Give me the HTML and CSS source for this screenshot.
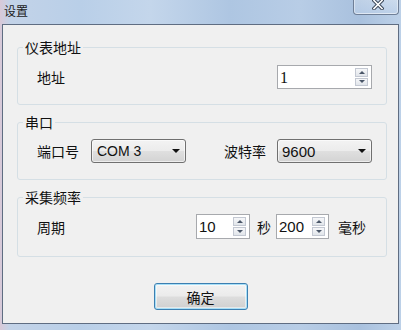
FILE: index.html
```html
<!DOCTYPE html>
<html lang="zh-CN">
<head>
<meta charset="utf-8">
<title>设置</title>
<link rel="stylesheet" href="styles.css">
</head>
<body>
<div class="window">
  <div class="titlebar">
    <span class="title">设置</span>
    <div class="close">
      <svg width="12" height="10" viewBox="0 0 12 10">
        <path d="M2 0.5 L10 8.5 M10 0.5 L2 8.5" stroke="#3a4658" stroke-width="3.6" stroke-linecap="square" fill="none"/>
        <path d="M2 0.5 L10 8.5 M10 0.5 L2 8.5" stroke="#ffffff" stroke-width="1.6" stroke-linecap="square" fill="none"/>
      </svg>
    </div>
  </div>
  <div class="client">
    <fieldset class="group first">
      <legend>仪表地址</legend>
      <div class="row">
        <span class="label">地址</span>
        <div class="spin w95 push">
          <span class="val serif">1</span>
          <div class="arrows"><span class="sb up"></span><span class="sb down"></span></div>
        </div>
      </div>
    </fieldset>
    <fieldset class="group">
      <legend>串口</legend>
      <div class="row">
        <span class="label">端口号</span>
        <div class="combo w95 gap12"><span class="val narrow">COM 3</span><span class="caret"></span></div>
        <span class="label push">波特率</span>
        <div class="combo w95 gap11"><span class="val">9600</span><span class="caret"></span></div>
      </div>
    </fieldset>
    <fieldset class="group">
      <legend>采集频率</legend>
      <div class="row tall">
        <span class="label">周期</span>
        <div class="spin w54 push">
          <span class="val">10</span>
          <div class="arrows"><span class="sb up"></span><span class="sb down"></span></div>
        </div>
        <span class="label unit1">秒</span>
        <div class="spin w53 gap5">
          <span class="val">200</span>
          <div class="arrows"><span class="sb up"></span><span class="sb down"></span></div>
        </div>
        <span class="label unit2">毫秒</span>
      </div>
    </fieldset>
    <div class="actions">
      <button class="btn" type="button">确定</button>
    </div>
  </div>
</div>
</body>
</html>
```

FILE: styles.css
```css
html, body {
  margin: 0;
  padding: 0;
}
body {
  width: 401px;
  height: 330px;
  overflow: hidden;
  font-family: "Noto Sans CJK SC", "Liberation Sans", sans-serif;
  color: #111;
}
.window {
  width: 401px;
  height: 330px;
  background: linear-gradient(90deg, #d9c9d8 0px, #c3d3e8 10px, #b9cfe8 80px, #c4d6eb 150px, #aec6e2 230px, #b8cde6 300px, #a9c1de 360px, #bdd1e8 401px);
  display: flex;
  flex-direction: column;
}
.titlebar {
  height: 24px;
  display: flex;
  justify-content: space-between;
  align-items: flex-start;
  flex: none;
}
.title {
  font-size: 12px;
  line-height: 12px;
  padding: 5px 0 0 4px;
  color: #1b1b1b;
}
.close {
  width: 44px;
  height: 14px;
  margin-right: 2px;
  border: 1px solid #6f7f97;
  border-top: none;
  border-radius: 0 0 4px 4px;
  background: linear-gradient(180deg, rgba(255,255,255,0.25), rgba(190,210,235,0.55));
  box-shadow: inset 0 -1px 0 rgba(255,255,255,0.55), inset 1px 0 0 rgba(255,255,255,0.4), inset -1px 0 0 rgba(255,255,255,0.4);
  display: flex;
  justify-content: center;
  align-items: flex-start;
}
.close svg {
  display: block;
  margin-left: 3px;
}
.client {
  height: 300px;
  box-sizing: border-box;
  margin: 0 2px;
  border: 1px solid #5f6d82;
  background: #f0f0f0;
  display: flex;
  flex-direction: column;
  flex: none;
}
.group {
  margin: 10px 11px 0 14px;
  border: 1px solid #d5dfe5;
  border-radius: 3px;
  padding: 10px 14px 16px 19px;
  min-width: 0;
}
.group.first {
  margin-top: 15px;
  padding-top: 11px;
  padding-bottom: 15px;
}
.group:last-of-type {
  padding-bottom: 17px;
}
legend {
  font-size: 14px;
  line-height: 14px;
  padding: 0 2px;
  margin-left: -14px;
  color: #111;
}
.row {
  display: flex;
  align-items: center;
  height: 24px;
}
.row.tall {
  height: 25px;
}
.label {
  font-size: 14px;
  line-height: 14px;
  white-space: nowrap;
}
.push {
  margin-left: auto;
}
.gap12 { margin-left: 12px; }
.gap11 { margin-left: 11px; }
.gap5 { margin-left: 5px; }
.unit1 { margin-left: 7px; }
.unit2 { margin-left: 9px; margin-right: 6px; }
.w95 { width: 95px; }
.w54 { width: 54px; }
.w53 { width: 53px; }
.spin {
  height: 100%;
  box-sizing: border-box;
  border: 1px solid #a7a9ad;
  background: #fff;
  display: flex;
  align-items: center;
  padding: 2px 3px 2px 2px;
}
.val {
  font-family: "Liberation Sans", sans-serif;
  font-size: 15px;
  line-height: 15px;
  flex: 1;
  color: #111;
}
.val.serif {
  font-family: "Liberation Serif", serif;
  font-size: 16px;
}
.val.narrow {
  font-size: 14px;
}
.arrows {
  width: 13px;
  align-self: stretch;
  display: flex;
  flex-direction: column;
  gap: 1px;
}
.sb {
  flex: 1;
  box-sizing: border-box;
  border: 1px solid #c3c8d2;
  background: linear-gradient(180deg, #f6f7f9, #e1e5ea);
  display: flex;
  justify-content: center;
  align-items: center;
}
.sb.up::after {
  content: "";
  border-left: 3px solid transparent;
  border-right: 3px solid transparent;
  border-bottom: 3px solid #4a5668;
}
.sb.down::after {
  content: "";
  border-left: 3px solid transparent;
  border-right: 3px solid transparent;
  border-top: 3px solid #4a5668;
}
.combo {
  height: 100%;
  box-sizing: border-box;
  border: 1px solid #707070;
  border-radius: 3px;
  background: linear-gradient(180deg, #f3f3f3 0%, #ececec 48%, #dfdfdf 52%, #d3d3d3 100%);
  box-shadow: inset 0 0 0 1px rgba(255,255,255,0.6);
  display: flex;
  align-items: center;
  padding: 0 5px 0 4px;
}
.combo .val.narrow {
  padding-left: 1px;
}
.caret {
  width: 0;
  height: 0;
  border-left: 4px solid transparent;
  border-right: 4px solid transparent;
  border-top: 4px solid #111;
  margin-right: 0;
}
.actions {
  display: flex;
  justify-content: center;
  margin-top: 26px;
}
.btn {
  width: 94px;
  height: 27px;
  margin: 0;
  padding: 0;
  border: 1px solid #3c7fb1;
  border-radius: 3px;
  background: linear-gradient(180deg, #f2f2f2 0%, #ebebeb 48%, #dddddd 52%, #cfcfcf 100%);
  box-shadow: inset 0 0 0 1px #a8dff7, inset 0 0 0 2px rgba(255,255,255,0.5);
  font-family: "Noto Sans CJK SC", sans-serif;
  font-size: 14px;
  line-height: 14px;
  color: #111;
}
```
